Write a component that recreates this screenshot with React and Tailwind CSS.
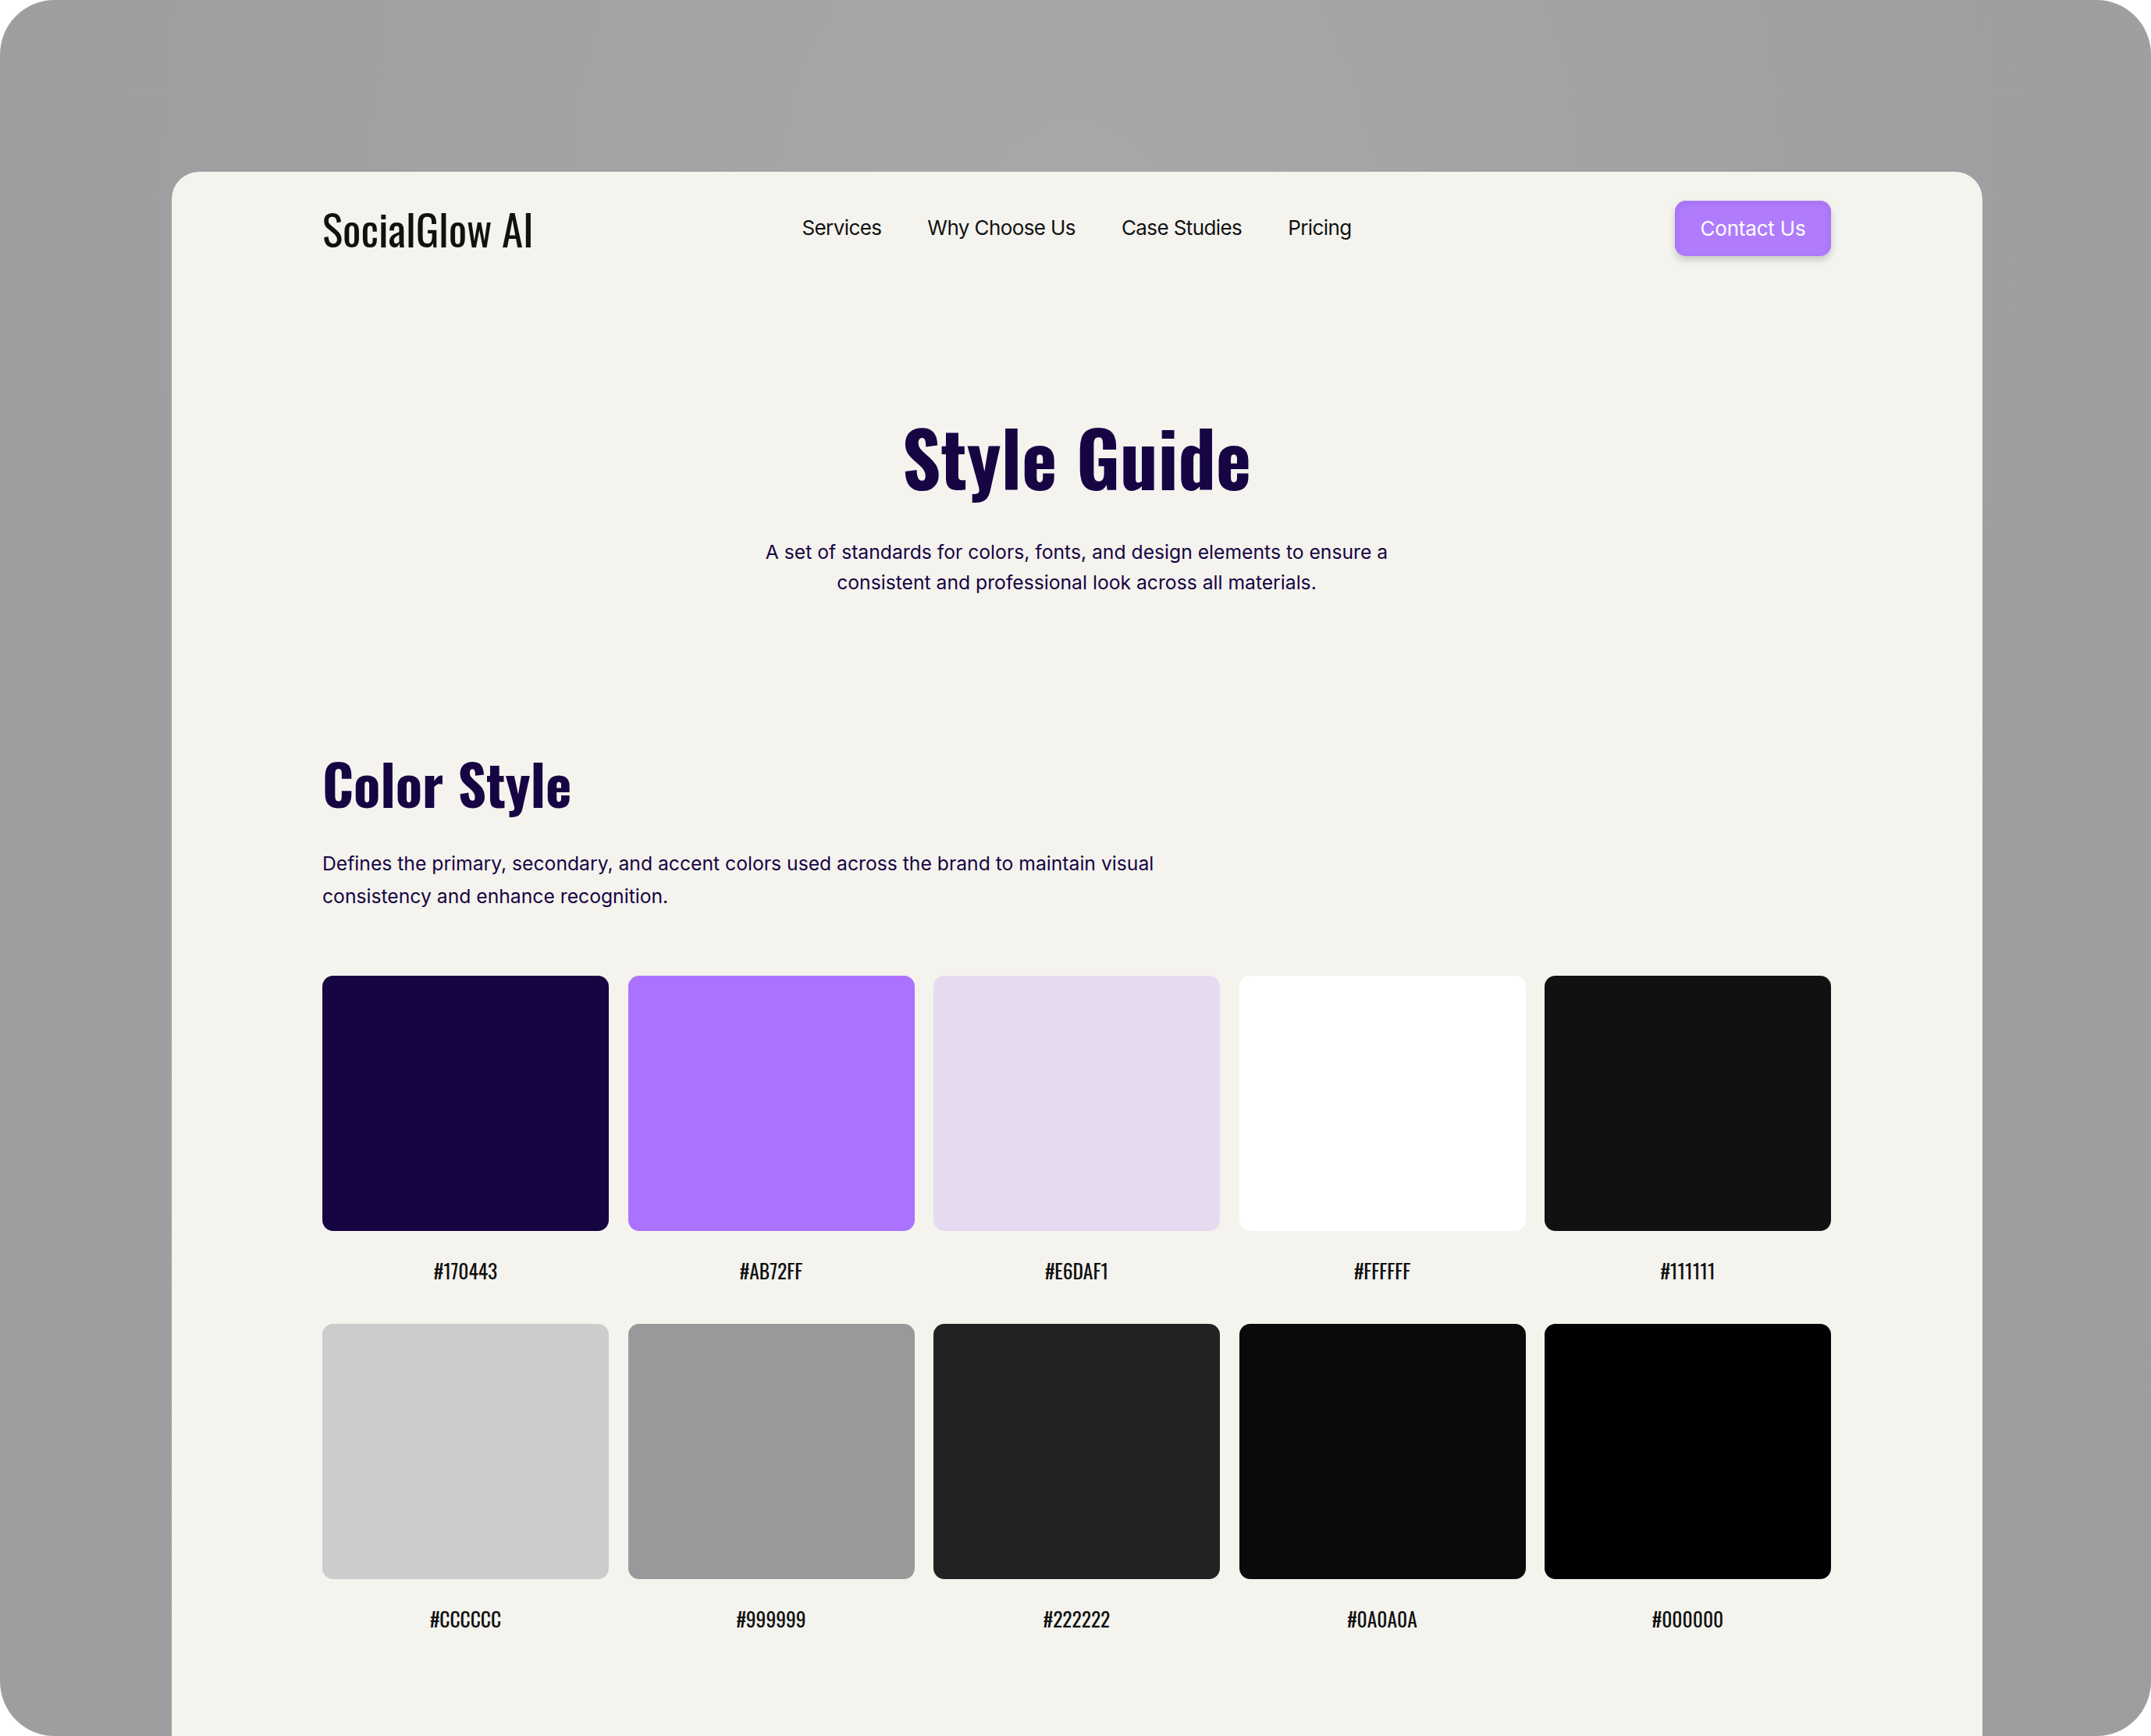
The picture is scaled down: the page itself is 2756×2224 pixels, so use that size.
const heading = { fontFamily: 'Oswald, "Roboto Condensed", "Liberation Sans", sans-serif' };

const SWATCHES = [
  { hex: '#170443', cls: 'bg-[#170443]' },
  { hex: '#AB72FF', cls: 'bg-[#ab72ff]' },
  { hex: '#E6DAF1', cls: 'bg-[#e6daf1]' },
  { hex: '#FFFFFF', cls: 'bg-[#ffffff]' },
  { hex: '#111111', cls: 'bg-[#111111]' },
  { hex: '#CCCCCC', cls: 'bg-[#cccccc]' },
  { hex: '#999999', cls: 'bg-[#999999]' },
  { hex: '#222222', cls: 'bg-[#222222]' },
  { hex: '#0A0A0A', cls: 'bg-[#0a0a0a]' },
  { hex: '#000000', cls: 'bg-[#000000]' },
];

const NAV = ['Services', 'Why Choose Us', 'Case Studies', 'Pricing'];

function Header() {
  return (
    <header className="grid h-[144px] grid-cols-[1fr_auto_1fr] items-center">
      <div className="text-[55px] leading-none text-[#111111]" style={heading}>
        SocialGlow AI
      </div>
      <nav className="flex items-center gap-[59px] text-[26px] tracking-[-0.6px] text-[#111111]">
        {NAV.map((item) => (
          <a key={item} href="#" className="leading-none">
            {item}
          </a>
        ))}
      </nav>
      <div className="flex justify-end">
        <button
          type="button"
          className="flex h-[71px] w-[200px] items-center justify-center rounded-[14px] bg-[#b07cfd] text-[26px] tracking-[-0.2px] text-white shadow-[0_5px_10px_rgba(0,0,0,0.18),inset_0_3px_8px_rgba(60,20,120,0.12),inset_0_1px_0_rgba(255,255,255,0.25)]"
        >
          Contact Us
        </button>
      </div>
    </header>
  );
}

function Swatch({ hex, cls }) {
  return (
    <div className="flex flex-col">
      <div className={`h-[327px] rounded-[14px] ${cls}`} />
      <div className="mt-[33px] text-center text-[25.5px] leading-[36px] text-[#111111]" style={heading}>
        {hex}
      </div>
    </div>
  );
}

export default function App() {
  return (
    <div className="min-h-[2224px] bg-white font-['Inter',sans-serif]">
      <div className="h-[2224px] overflow-hidden rounded-[70px] bg-[radial-gradient(ellipse_at_50%_15%,#a8a8aa_0%,#9f9fa1_60%,#9e9ea0_100%)] pl-[220px] pr-[216px] pt-[220px]">
        <div className="h-full rounded-t-[35px] bg-[#f4f3ee] pl-[193px] pr-[194px]">
          <Header />

          <section className="mt-[163px] flex flex-col items-center text-[#170443]">
            <h1 className="text-[96.5px] font-bold leading-[1.2]" style={heading}>
              Style Guide
            </h1>
            <p className="mt-[45px] text-center text-[24.7px] leading-[39px]">
              A set of standards for colors, fonts, and design elements to ensure a
              <br />
              consistent and professional look across all materials.
            </p>
          </section>

          <section className="mt-[195px] text-[#170443]">
            <h2 className="text-[71px] font-bold leading-[84px]" style={heading}>
              Color Style
            </h2>
            <p className="mt-[40px] text-[24.7px] leading-[42px]">
              Defines the primary, secondary, and accent colors used across the brand to maintain visual
              <br />
              consistency and enhance recognition.
            </p>

            <div className="mt-[81px] grid grid-cols-5 gap-x-[24.5px] gap-y-[50px]">
              {SWATCHES.map((s) => (
                <Swatch key={s.hex} {...s} />
              ))}
            </div>
          </section>
        </div>
      </div>
    </div>
  );
}
